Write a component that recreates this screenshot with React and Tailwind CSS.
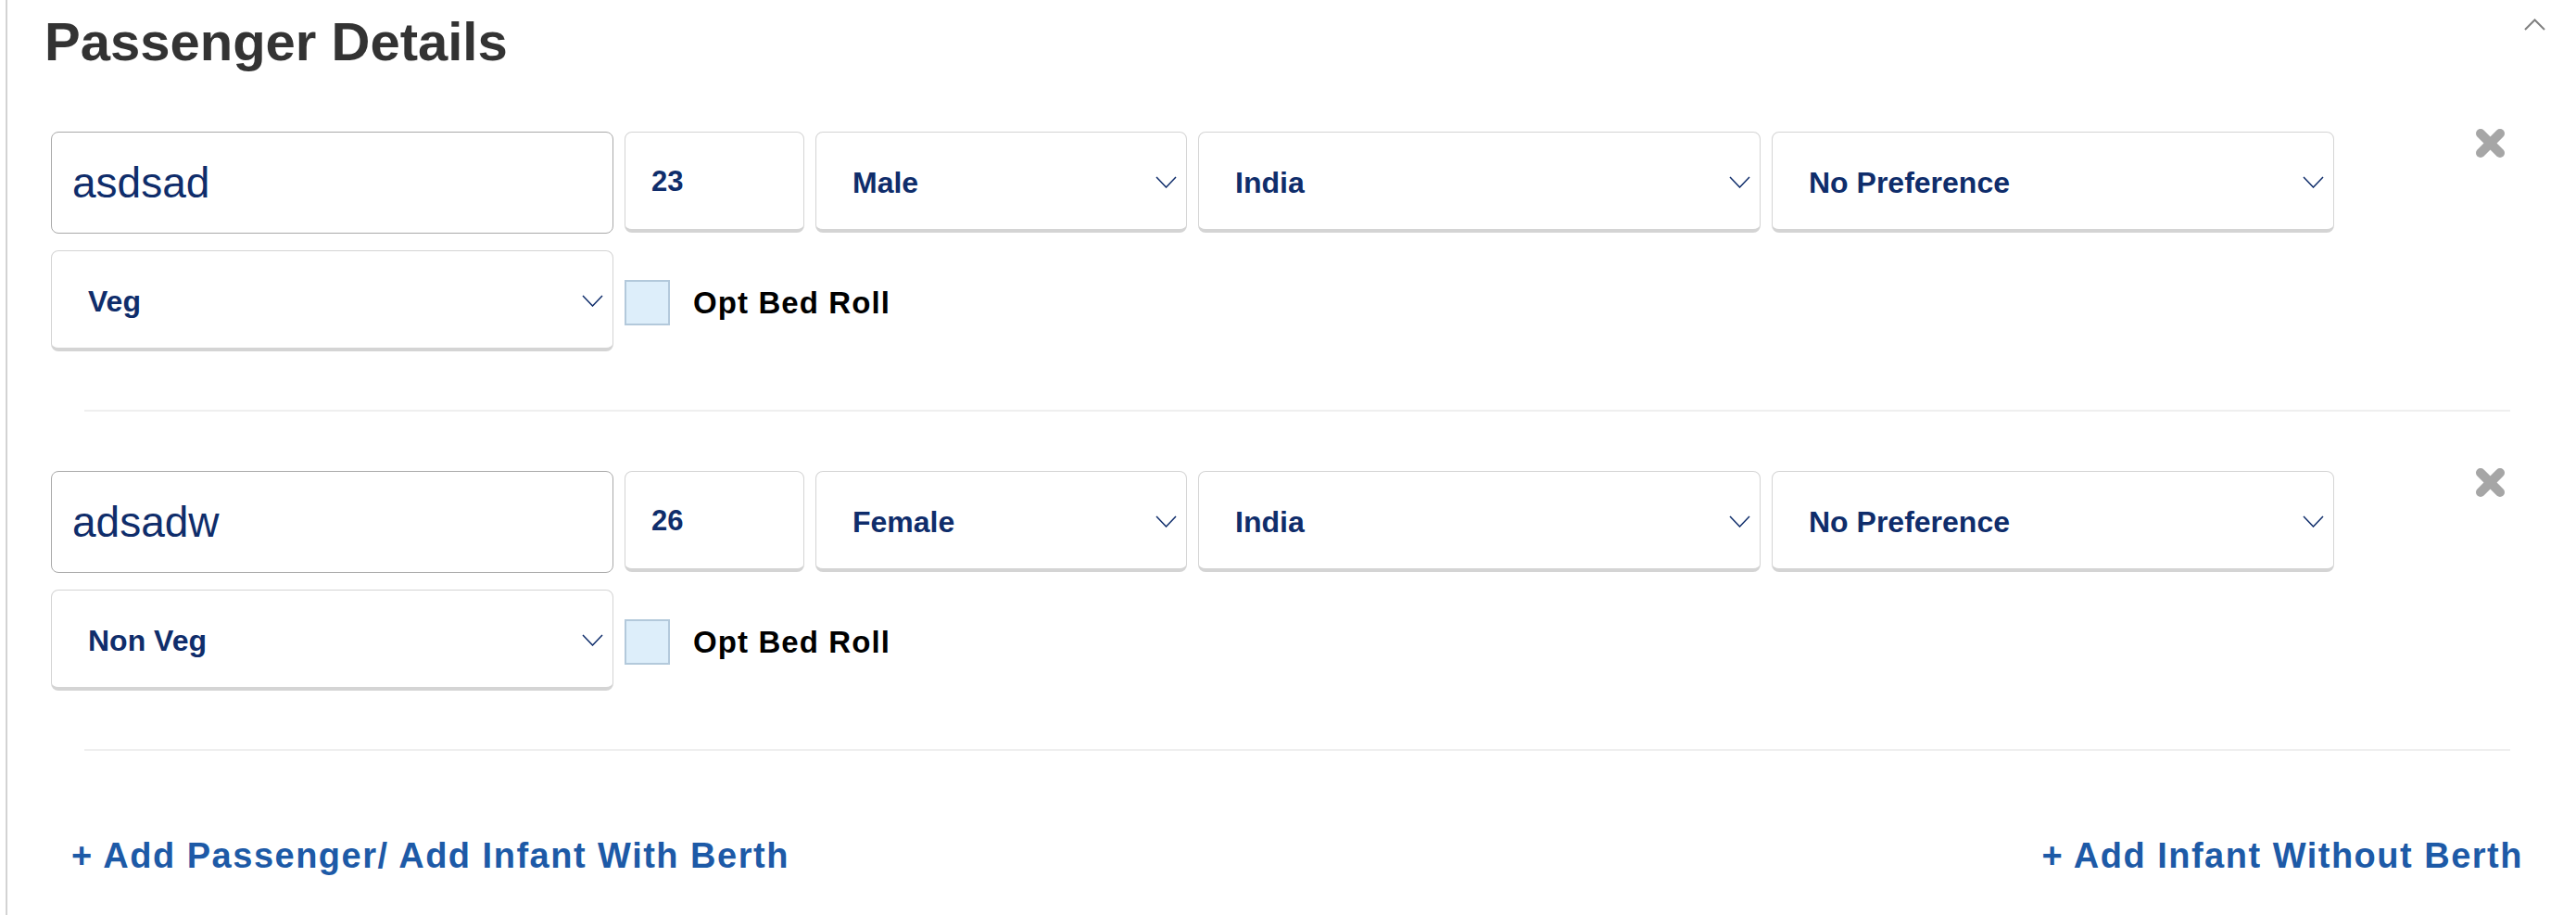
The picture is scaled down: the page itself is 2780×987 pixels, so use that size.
import React from 'react'

const passengers = [
    { name: 'asdsad', age: '23', gender: 'Male', country: 'India', berth: 'No Preference', meal: 'Veg' },
    { name: 'adsadw', age: '26', gender: 'Female', country: 'India', berth: 'No Preference', meal: 'Non Veg' },
]

// тонкая стрелка для выпадающих списков
function Chevron() {
    return (
        <svg width="23" height="13" viewBox="0 0 23 13" className="shrink-0">
            <polyline points="1,1 11.5,12 22,1" fill="none" stroke="#0f2d6b" strokeWidth="1.5" />
        </svg>
    )
}

function SelectBox({ value, width }) {
    return (
        <div className={`${width} h-[109px] shrink-0 bg-white rounded-lg border border-b-4 border-[#d4d4d4] flex items-center justify-between pl-[39px] pr-[10px] pt-[3px]`}>
            <span className="text-[32px] font-bold text-[#0f2d6b]">{value}</span>
            <Chevron />
        </div>
    )
}

function PassengerRow({ p }) {
    return (
        <div className="flex items-start pl-[47px]">
            <div className="w-[2464px]">
                <div className="flex gap-3">
                    <div className="w-[607px] h-[110px] shrink-0 rounded-lg border-[1.5px] border-[#a9a9a9] flex items-center pl-[22px]">
                        <span className="text-[46px] text-[#0f2d6b]">{p.name}</span>
                    </div>
                    <div className="w-[194px] h-[109px] shrink-0 rounded-lg border border-b-4 border-[#d4d4d4] flex items-center pl-[28px] pt-[3px]">
                        <span className="text-[31px] font-bold text-[#0f2d6b]">{p.age}</span>
                    </div>
                    <SelectBox value={p.gender} width="w-[401px]" />
                    <SelectBox value={p.country} width="w-[607px]" />
                    <SelectBox value={p.berth} width="w-[607px]" />
                </div>
                <div className="flex items-start mt-[18px]">
                    <SelectBox value={p.meal} width="w-[607px]" />
                    <div className="w-[49px] h-[49px] ml-3 mt-[32px] border-2 border-[#b3c9db] bg-[#ddeefa]" />
                    <span className="ml-[25px] mt-[40px] text-[33px] leading-none font-bold tracking-[1.1px] text-black">Opt Bed Roll</span>
                </div>
            </div>
            <svg width="35" height="35" viewBox="0 0 35 35" className="ml-[151px] -mt-[5px] shrink-0">
                <line x1="7" y1="7" x2="28" y2="28" stroke="#a6a6a6" strokeWidth="10" strokeLinecap="round" />
                <line x1="28" y1="7" x2="7" y2="28" stroke="#a6a6a6" strokeWidth="10" strokeLinecap="round" />
            </svg>
        </div>
    )
}

export default function App() {
    return (
        <div className="w-[2780px] h-[987px] bg-white overflow-hidden font-['Liberation_Sans',Arial,sans-serif]">
            <div className="ml-[6px] h-full border-l-2 border-[#d3d3d3]">
                <div className="flex items-start justify-between pl-[40px] pr-[33px] pt-[16px]">
                    <h1 className="text-[58px] leading-[58px] font-bold text-[#333333]">Passenger Details</h1>
                    <svg width="23" height="13" viewBox="0 0 23 13" className="mt-[4px]">
                        <polyline points="1,12 11.5,1.5 22,12" fill="none" stroke="#808080" strokeWidth="2" />
                    </svg>
                </div>

                <div className="mt-[68px]">
                    <PassengerRow p={passengers[0]} />
                    <div className="ml-[83px] w-[2618px] h-[2px] bg-[#efefef] mt-[63px]" />
                    <div className="mt-[64px]">
                        <PassengerRow p={passengers[1]} />
                    </div>
                    <div className="ml-[83px] w-[2618px] h-[2px] bg-[#efefef] mt-[63px]" />
                </div>

                <div className="flex justify-between pl-[69px] pr-[57px] mt-[94px]">
                    <span className="text-[38px] leading-none font-bold tracking-[1.5px] text-[#1d5aa7]">+ Add Passenger/ Add Infant With Berth</span>
                    <span className="text-[38px] leading-none font-bold tracking-[1.5px] text-[#1d5aa7]">+ Add Infant Without Berth</span>
                </div>
            </div>
        </div>
    )
}
